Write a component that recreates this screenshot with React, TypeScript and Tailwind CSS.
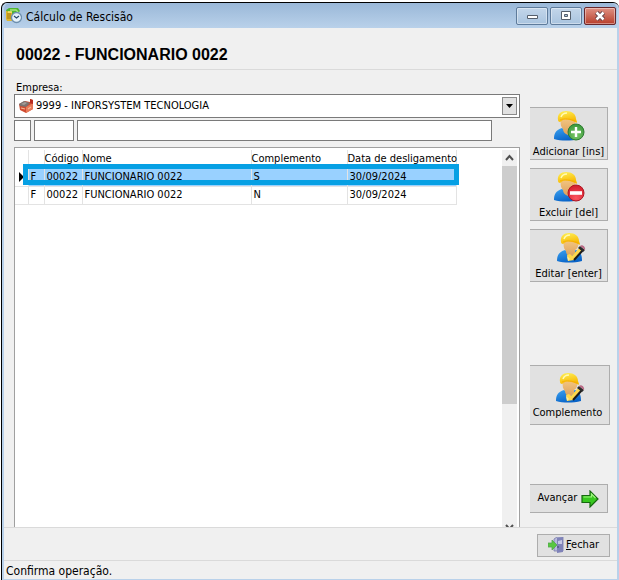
import { type ReactNode } from "react";

const rows = [
  { tipo: "F", codigo: "00022", nome: "FUNCIONARIO 0022", complemento: "S", data: "30/09/2024" },
  { tipo: "F", codigo: "00022", nome: "FUNCIONARIO 0022", complemento: "N", data: "30/09/2024" },
];

function Worker({ badge }: { badge: "add" | "remove" | "edit" }) {
  return (
    <svg viewBox={badge === "edit" ? "-3 1 32 31" : "0 1 32 31"} className="h-[31px] w-8 shrink-0 overflow-visible" aria-hidden="true">
      <defs>
        <linearGradient id="helmet" x1="0" y1="0" x2="0.300" y2="1">
          <stop offset="0" stopColor="#fff25a" />
          <stop offset="1" stopColor="#f7b600" />
        </linearGradient>
        <linearGradient id="shirt" x1="0" y1="0" x2="0.500" y2="1">
          <stop offset="0" stopColor="#3ba2f0" />
          <stop offset="1" stopColor="#0863c8" />
        </linearGradient>
        <linearGradient id="skin" x1="0" y1="0" x2="0" y2="1">
          <stop offset="0" stopColor="#f2c582" />
          <stop offset="1" stopColor="#dca05a" />
        </linearGradient>
        <radialGradient id="green" cx=".5" cy=".7" r=".8">
          <stop offset="0" stopColor="#7cc86a" />
          <stop offset="1" stopColor="#2e8f32" />
        </radialGradient>
        <radialGradient id="red" cx=".5" cy=".8" r=".9">
          <stop offset="0" stopColor="#fb5560" />
          <stop offset="1" stopColor="#cc1524" />
        </radialGradient>
      </defs>
      <path d="M1 30c0-6 2-9 8-11l5 3 6-3c5 2 6 5 6 11-8 2-18 2-25 0z" fill="url(#shirt)" />
      <path d="M8 11c3-2 10-2 14 1 1 3-1 6-3 7v3l-4 4c-3-1-5-3-5-6-2-2-3-5-2-9z" fill="url(#skin)" />
      <path d="M5 11C4 5 8 2 13 2c6 0 10 3 10 8l1 3c0 1-1 1-2 0-4-2-9-3-12-2l-3 2c-1 0-2-1-2-2z" fill="url(#helmet)" />
      <path d="M8 8c1-3 3-4 6-4" stroke="#fffbb5" strokeWidth="1.500" fill="none" />
      <path d="M7 11c4-2 11-1 15 1" stroke="#f5a900" strokeWidth=".8" fill="none" />
      {badge === "add" && (
        <g>
          <circle cx="23" cy="23" r="8" fill="url(#green)" stroke="#2e7d32" />
          <path d="M23 18v10M18 23h10" stroke="#fff" strokeWidth="2.400" />
        </g>
      )}
      {badge === "remove" && (
        <g>
          <circle cx="23" cy="23" r="8" fill="url(#red)" stroke="#b01523" />
          <path d="M17 23h12" stroke="#fff" strokeWidth="3.600" />
        </g>
      )}
      {badge === "edit" && (
        <g>
          <path d="M12 30l-1-6 3-1 2 2 8-9 4 3-10 10z" fill="#ffd84a" />
          <path d="M18 29l9-10" stroke="#1c1c1c" strokeWidth="2" />
          <path d="M22 17l2-2 5 4-2 2z" fill="#2b2b2b" />
          <path d="M24 15c2-2 6 1 5 4z" fill="#b96a86" />
          <path d="M12 30l-1-5 3 3z" fill="#ffeb9a" />
        </g>
      )}
    </svg>
  );
}

function ClockIcon() {
  return (
    <svg viewBox="0 0 16 16" className="h-4 w-4" aria-hidden="true">
      <path d="M0 2l3-2h9l2 3-3 3H1z" fill="#4eb532" />
      <path d="M4 2h6l2 2" stroke="#a8e57c" strokeWidth="1.500" fill="none" />
      <path d="M0 3l6 1v9H1l-1-2z" fill="#e0b62c" />
      <path d="M1 6h4M1 8h4M1 10h4" stroke="#9d7614" strokeWidth="1" />
      <path d="M2 4h4" stroke="#f8e772" strokeWidth="1.500" />
      <circle cx="10.500" cy="9.500" r="5" fill="#e6f2fb" stroke="#6d8fae" strokeWidth="1.300" />
      <path d="M8 8l2.500 2L13 8" stroke="#244768" strokeWidth="1.200" fill="none" />
    </svg>
  );
}

function FactoryIcon() {
  return (
    <svg viewBox="0 0 16 16" className="h-4 w-4 shrink-0" aria-hidden="true">
      <path d="M1 6l6-3 5 1V1l3 1v9l-7 4-6-3z" fill="#cf4b31" />
      <path d="M1 6l5-3 6 2-4 4-6-1z" fill="#7b7370" />
      <path d="M3 6l4-2 2 1-3 2z" fill="#a59d98" />
      <path d="M8 9l7-4v6l-7 4z" fill="#e87957" />
      <path d="M12 1l3 1v4l-3-1z" fill="#b82d20" />
      <path d="M3 10l4 1M10 11l3-2" stroke="#f7ba94" strokeWidth="1.200" />
    </svg>
  );
}

function ArrowIcon() {
  return (
    <svg viewBox="0 0 18 18" className="h-[18px] w-[18px]" aria-hidden="true">
      <path d="M1 5.500h8V1l8 8-8 8v-4.500H1z" fill="#38c820" stroke="#16670f" strokeWidth="1.200" />
      <path d="M2.500 7h8V4l4 4" stroke="#9bf47c" strokeWidth="1.200" fill="none" />
    </svg>
  );
}

function DoorIcon() {
  return (
    <svg viewBox="0 0 16 16" className="h-4 w-4" aria-hidden="true">
      <path d="M6 2l3-2h6v14H6z" fill="#b7b9dd" stroke="#777aa7" strokeWidth=".8" />
      <path d="M9 1l6-1v15l-6 1z" fill="#7f82b8" />
      <path d="M10 4l4-1v4h-4z" fill="#c6c8e5" />
      <path d="M10 9v2" stroke="#3f426d" />
      <path d="M0 6h4V3l5 5-5 5v-3H0z" fill="#58c740" stroke="#53a650" strokeWidth=".8" />
    </svg>
  );
}

function ActionButton({ label, badge, className = "mr-0.5 h-[53px] pt-0.5" }: { label: string; badge: "add" | "remove" | "edit"; className?: string }) {
  return (
    <button type="button" className={`flex flex-col items-center justify-between border-y border-r border-[#adadad] bg-[#e1e1e1] ${className}`}>
      <Worker badge={badge} />
      <span className="leading-[14px] whitespace-nowrap">{label}</span>
    </button>
  );
}

function CaptionButton({ label, className = "border-[#5e7b9b] from-[#c3d6ea] to-[#a9c4df]", children }: { label: string; className?: string; children: ReactNode }) {
  return (
    <button type="button" aria-label={label} className={`flex h-[18px] w-8 items-center justify-center rounded-xs border bg-linear-to-b shadow-[inset_0_0_0_1px_#ffffff66] ${className}`}>
      <svg viewBox="0 0 14 12" className="h-3 w-3.5" aria-hidden="true">{children}</svg>
    </button>
  );
}

export default function App() {
  return (
    <div className="flex min-h-screen flex-col bg-white pt-0.5 pl-px font-['DejaVu_Sans_Condensed','Noto_Sans',sans-serif] text-[11px] text-black">
      <main className="flex grow flex-col rounded-t-md border-t border-l border-black bg-[#b9d1ea] pr-0.5 pb-px pl-0.5">
        <header className="flex h-[25px] items-center rounded-t-md bg-linear-to-b from-[#9ab8d8] to-[#b9d1ea] pr-px pl-0.5">
          <ClockIcon />
          <h1 className="ml-1 grow pt-0.5 text-xs">Cálculo de Rescisão</h1>
          <div className="flex gap-0.5">
            <CaptionButton label="Minimizar">
              <path d="M2.500 5.500h10v3h-10z" fill="#fff" stroke="#555f6c" />
            </CaptionButton>
            <CaptionButton label="Maximizar">
              <path d="M2.500 1.500h9v8h-9z" fill="#fff" stroke="#555f6c" />
              <path d="M5.500 4.500h3v2h-3z" fill="#a9c4df" stroke="#555f6c" />
            </CaptionButton>
            <CaptionButton label="Fechar janela" className="border-[#68272c] from-[#df9183] to-[#b73c2a]">
              <path d="M3.500 2.500l7 7M10.500 2.500l-7 7" stroke="#5c4147" strokeWidth="4.500" />
              <path d="M3.500 2.500l7 7M10.500 2.500l-7 7" stroke="#fff" strokeWidth="2.500" />
            </CaptionButton>
          </div>
        </header>

        <div className="flex grow flex-col bg-[#f0f0f0]">
          <h2 className="flex h-[42px] items-center border-b border-[#dadada] pt-3 pl-3 font-['Liberation_Sans',sans-serif] text-base font-bold">00022 - FUNCIONARIO 0022</h2>

          <div className="flex grow pl-2.5">
            <section className="flex min-w-0 grow flex-col pt-3">
              <label htmlFor="empresa" className="pl-0.5 leading-3">Empresa:</label>
              <div className="relative flex h-6 items-center border border-[#7a7a7a] bg-white pl-[3px]">
                <FactoryIcon />
                <select id="empresa" className="ml-0.5 grow appearance-none outline-none">
                  <option>9999 - INFORSYSTEM TECNOLOGIA</option>
                </select>
                <span className="pointer-events-none absolute top-0.5 right-0.5 flex h-[18px] w-[15px] items-center justify-center border border-[#8a8a8a] bg-[#e1e1e1]">
                  <svg viewBox="0 0 7 4" className="h-1 w-[7px]"><path d="M0 0h7L3.500 4z" /></svg>
                </span>
              </div>
              <div className="mt-0.5 mr-7 flex gap-[3px]">
                <input aria-label="Tipo" className="h-[21px] w-[17px] border border-[#7a7a7a] bg-white" />
                <input aria-label="Código" className="h-[21px] w-10 border border-[#7a7a7a] bg-white" />
                <input aria-label="Nome" className="h-[21px] min-w-0 grow border border-[#7a7a7a] bg-white" />
              </div>

              <div className="mt-1.5 flex grow border-x border-t border-[#a0a0a0] bg-white pt-0.5 pr-0.5">
                <div className="grow">
                  <div className="relative w-[441px]">
                    <table className="w-full table-fixed border-collapse text-left leading-[14px]">
                      <colgroup>
                        <col className="w-[13px]" />
                        <col className="w-4" />
                        <col className="w-[38px]" />
                        <col className="w-[169px]" />
                        <col className="w-24" />
                        <col className="w-[109px]" />
                      </colgroup>
                      <thead>
                        <tr className="h-[18px]">
                          <th className="border-r border-[#e3e3e3]" />
                          <th className="border-r border-[#e3e3e3]" />
                          {["Código", "Nome", "Complemento", "Data de desligamento"].map((title) => (
                            <th key={title} className="border-r border-[#e3e3e3] font-normal whitespace-nowrap">{title}</th>
                          ))}
                        </tr>
                      </thead>
                      <tbody>
                        {rows.map((row, i) => (
                          <tr key={row.complemento} className={i === 0 ? "h-[18px] bg-[#99d1ff]" : "h-[18px]"}>
                            <td className="border-r border-b border-[#e3e3e3] bg-white">
                              {i === 0 && <svg viewBox="0 0 5 10" className="ml-1 h-2.5 w-[5px]"><path d="M0 0l5 5-5 5z" /></svg>}
                            </td>
                            <td className="border-r border-b border-[#e3e3e3] pl-0.5">{row.tipo}</td>
                            <td className="border-r border-b border-[#e3e3e3] pl-0.5">{row.codigo}</td>
                            <td className="border-r border-b border-[#e3e3e3] pl-0.5 whitespace-nowrap">{row.nome}</td>
                            <td className="border-r border-b border-[#e3e3e3] pl-0.5">{row.complemento}</td>
                            <td className="border-r border-b border-[#e3e3e3] pl-0.5">{row.data}</td>
                          </tr>
                        ))}
                      </tbody>
                    </table>
                    <div className="pointer-events-none absolute top-3.5 -right-[3px] left-2 h-[21px] border-[5px] border-[#06a0e4]" />
                  </div>
                </div>
                <div className="flex w-[15px] shrink-0 flex-col overflow-hidden bg-[#f0f0f0]">
                  <svg viewBox="0 0 15 16" className="h-4 w-[15px] shrink-0"><path d="M4 10l3.500-4 3.500 4" fill="none" stroke="#505050" strokeWidth="2" /></svg>
                  <div className="grow-2 basis-0 bg-[#cdcdcd]" />
                  <div className="grow basis-0" />
                  <svg viewBox="0 0 15 4" className="h-1 w-[15px] shrink-0"><path d="M4 2l3.500 4L11 2" fill="none" stroke="#505050" strokeWidth="2" /></svg>
                </div>
              </div>
            </section>

            <aside className="flex w-[97px] shrink-0 flex-col pt-[37px] pr-[7px] pl-2.5">
              <div className="flex flex-col gap-2">
                <ActionButton label="Adicionar [ins]" badge="add" />
                <ActionButton label="Excluir [del]" badge="remove" />
                <ActionButton label="Editar [enter]" badge="edit" />
              </div>
              <ActionButton label="Complemento" badge="edit" className="mt-[83px] h-[60px] pt-1.5 pr-1 pb-1" />
              <button type="button" className="mt-[59px] mr-0.5 flex h-[29px] items-center justify-center gap-1 border-y border-r border-[#adadad] bg-[#e1e1e1]">
                Avançar <ArrowIcon />
              </button>
            </aside>
          </div>

          <footer className="border-t border-[#dadada]">
            <div className="flex h-8 items-center justify-end pt-0.5 pr-[7px]">
              <button type="button" className="flex h-[23px] w-[73px] items-center justify-center gap-0.5 border border-[#adadad] bg-[#e1e1e1]">
                <DoorIcon /> <span><u>F</u>echar</span>
              </button>
            </div>
            <p className="h-[19px] border-t border-[#dadada] pt-px pl-0.5 text-xs leading-[19px]">Confirma operação.</p>
          </footer>
        </div>
      </main>
    </div>
  );
}
